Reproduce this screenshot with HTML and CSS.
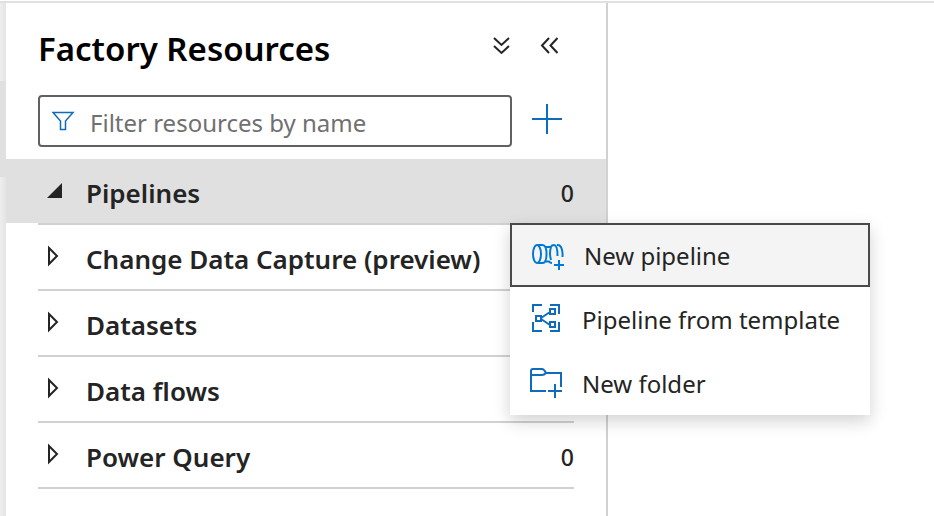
FILE: index.html
```html
<!DOCTYPE html>
<html lang="en">
<head>
<meta charset="utf-8">
<title>Factory Resources</title>
<link rel="stylesheet" href="styles.css">
</head>
<body>
<div class="app">
  <div class="rail"><div class="rail-active"></div></div>
  <aside class="panel">
    <header class="panel-header">
      <h1>Factory Resources</h1>
      <button class="icon-button" type="button" aria-label="Collapse all">
        <svg width="20" height="20" viewBox="0 0 20 20"><path d="M2 2l7.500 7l7.500-7M2 10l7.500 7l7.500-7"/></svg>
      </button>
      <button class="icon-button" type="button" aria-label="Hide panel">
        <svg width="20" height="20" viewBox="0 0 20 20"><path d="M9 2l-7 7.500l7 7.500M17.500 2l-7 7.500l7 7.500"/></svg>
      </button>
    </header>
    <div class="filter-row">
      <label class="filter">
        <svg class="funnel" width="24" height="22" viewBox="0 0 24 22"><path d="M1 2.500h20l-7.500 8.500v8.500h-5v-8.500z"/></svg>
        <input type="text" placeholder="Filter resources by name" aria-label="Filter resources by name">
      </label>
      <button class="add-button" type="button" aria-label="Add new resource">
        <svg width="30" height="30" viewBox="0 0 30 30"><path d="M15 0v30M0 15h30"/></svg>
      </button>
    </div>
    <ul class="tree">
      <li class="selected">
        <button class="row" type="button" aria-expanded="true">
          <svg class="arrow open" width="18" height="24" viewBox="0 0 18 24"><path d="M1 20h15v-15z"/></svg>
          <span class="name">Pipelines</span><span class="count">0</span>
        </button>
        <div class="menu" role="menu">
          <button class="menu-item focused" type="button" role="menuitem">
            <svg width="36" height="36" viewBox="0 0 36 36"><ellipse cx="7" cy="17" rx="4" ry="9"/><path d="M7 8h5.500c2.500 0 4 4 4 9s-1.500 9-4 9h-5.500M14.500 10h6q1.500-2 3.500-2c2.500 0 3.500 5 3.500 11M27 8h1c3 0 5 5 4.500 12M21 10q-2 6 0 13M16 24.500h3q1 1.500 3 1.500M29 23v10M24 28h10"/></svg>
            <span>New pipeline</span>
          </button>
          <button class="menu-item" type="button" role="menuitem">
            <svg width="36" height="36" viewBox="0 0 36 36"><path d="M5 11v-7h9M22 4h9v9M31 21v9h-9M14 30h-9v-9M8 15h5v5h-5zM22 8h5v5h-5zM22 21h5v5h-5zM13 17l9-6M13 18l9 6"/></svg>
            <span>Pipeline from template</span>
          </button>
          <button class="menu-item" type="button" role="menuitem">
            <svg width="36" height="36" viewBox="0 0 36 36"><path d="M18 26h-15v-20q0-2 2-2h9q2 0 4 4h15v14M3 10h11q2 0 4-2M27 19v14M20 26h14"/></svg>
            <span>New folder</span>
          </button>
        </div>
      </li>
      <li>
        <button class="row" type="button" aria-expanded="false">
          <svg class="arrow" width="18" height="24" viewBox="0 0 18 24"><path d="M3 4v16l8-8z"/></svg>
          <span class="name">Change Data Capture (preview)</span><span class="count">0</span>
        </button>
      </li>
      <li>
        <button class="row" type="button" aria-expanded="false">
          <svg class="arrow" width="18" height="24" viewBox="0 0 18 24"><path d="M3 4v16l8-8z"/></svg>
          <span class="name">Datasets</span><span class="count">0</span>
        </button>
      </li>
      <li>
        <button class="row" type="button" aria-expanded="false">
          <svg class="arrow" width="18" height="24" viewBox="0 0 18 24"><path d="M3 4v16l8-8z"/></svg>
          <span class="name">Data flows</span><span class="count">0</span>
        </button>
      </li>
      <li>
        <button class="row" type="button" aria-expanded="false">
          <svg class="arrow" width="18" height="24" viewBox="0 0 18 24"><path d="M3 4v16l8-8z"/></svg>
          <span class="name">Power Query</span><span class="count">0</span>
        </button>
      </li>
    </ul>
  </aside>
  <main class="canvas"></main>
</div>
</body>
</html>
```
FILE: styles.css
```css
* {
  box-sizing: border-box;
}

body {
  margin: 0;
  padding-top: 1px;
  background: #fff;
  color: #242424;
  font-family: "Segoe UI", "Noto Sans", "Open Sans", sans-serif;
}

button {
  margin: 0;
  padding: 0;
  border: 0;
  background: none;
  color: inherit;
  font: inherit;
  text-align: left;
}

svg {
  display: block;
  flex: none;
  fill: none;
  stroke: #0f6cbd;
  stroke-width: 2;
}

.app {
  display: flex;
  min-height: calc(100vh - 1px);
  border-top: 2px solid #e0e0e0;
}

.rail {
  flex: none;
  width: 6px;
  padding-top: 78px;
  background: linear-gradient(to right, #eee, #e4e4e4);
}

.rail-active {
  height: 96px;
  background: #e0e0e0;
}

.panel {
  flex: 0 1 602px;
  min-width: 0;
  border-right: 2px solid #d1d1d1;
}

.canvas {
  flex: 1;
}

.panel-header {
  display: flex;
  align-items: center;
  gap: 28px;
  height: 92px;
  padding: 0 46px 0 32px;
}

h1 {
  flex: 1;
  margin: 0;
  color: #000;
  font-size: 33px;
  font-weight: 600;
  line-height: 48px;
}

.icon-button svg {
  stroke: #242424;
}

.panel-header .icon-button {
  margin-bottom: 6px;
}

.filter-row {
  display: flex;
  align-items: center;
  gap: 20px;
  padding: 0 44px 12px 32px;
}

.filter {
  display: flex;
  flex: 1;
  align-items: center;
  gap: 14px;
  min-width: 0;
  height: 52px;
  padding: 0 12px;
  border: 2px solid #616161;
  border-radius: 4px;
}

.filter input {
  flex: 1;
  min-width: 0;
  height: 48px;
  padding: 2px 0 0;
  border: 0;
  outline: 0;
  background: none;
  color: #242424;
  font: inherit;
  font-size: 24px;
}

.filter input::placeholder {
  color: #707070;
}

.add-button {
  margin-bottom: 4px;
}

.tree {
  margin: 0;
  padding: 0;
  list-style: none;
}

.tree li {
  position: relative;
}

.tree li::after {
  display: block;
  height: 2px;
  margin: 0 32px;
  background: #d1d1d1;
  content: "";
}

.row {
  display: flex;
  align-items: center;
  width: 100%;
  height: 64px;
  padding: 4px 32px 0 40px;
}

.selected .row {
  background: #e0e0e0;
}

.arrow {
  margin-bottom: 6px;
  stroke: #242424;
}

.funnel {
  stroke-width: 1.500;
}

.arrow.open {
  fill: #242424;
  stroke: none;
}

.name {
  flex: 1;
  padding-left: 22px;
  font-size: 26px;
  font-weight: 600;
  line-height: 36px;
}

.count {
  font-size: 23px;
  font-weight: 500;
  line-height: 36px;
}

.menu {
  position: absolute;
  z-index: 1;
  top: 64px;
  left: calc(100% - 96px);
  width: 360px;
  background: #fff;
  box-shadow: 0 6px 16px rgba(0, 0, 0, 0.18);
}

.menu-item {
  display: flex;
  align-items: center;
  gap: 18px;
  width: 100%;
  height: 64px;
  padding: 0 18px;
  font-size: 24px;
  white-space: nowrap;
}

.menu-item.focused {
  border: 2px solid #4a4a4a;
  background: #f4f4f4;
}

.focused svg {
  stroke: #0078d4;
}
```
